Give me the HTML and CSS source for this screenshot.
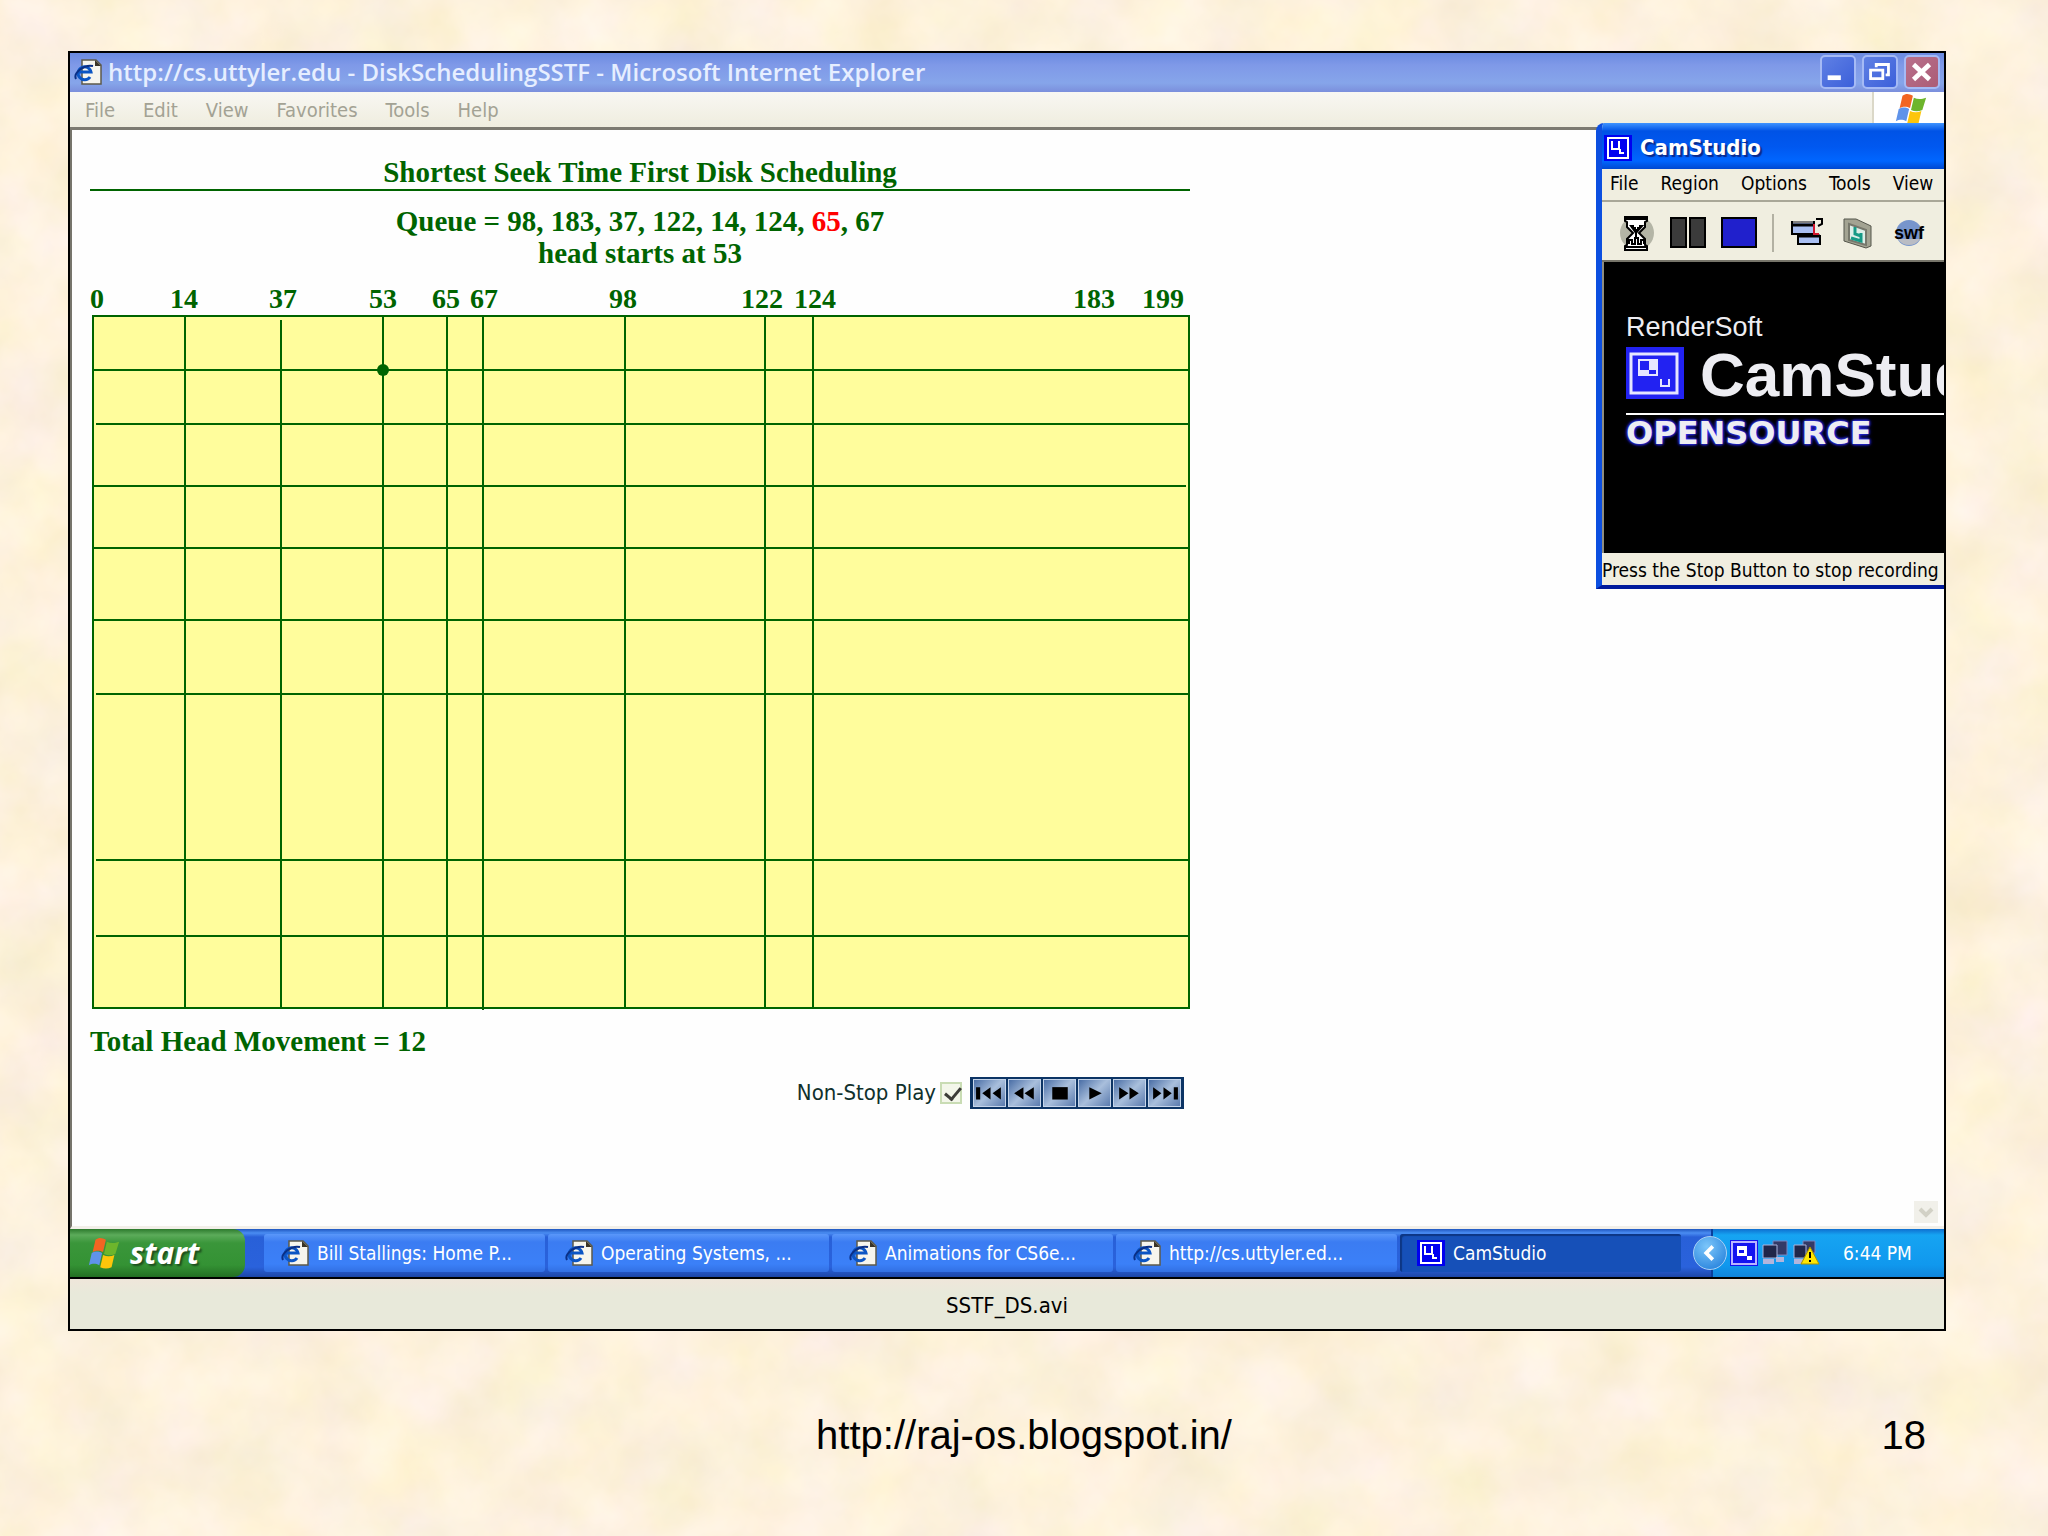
FILE: index.html
```html
<!DOCTYPE html>
<html lang="en">
<head>
    <meta charset="UTF-8">
    <title>SSTF Disk Scheduling</title>
    <link rel="stylesheet" href="styles.css">
</head>
<body>
    <svg class="paper" aria-hidden="true">
        <filter id="paperGrain" x="0" y="0" width="100%" height="100%" color-interpolation-filters="sRGB">
            <feTurbulence type="fractalNoise" baseFrequency="0.014" numOctaves="4" seed="7"/>
            <feColorMatrix type="matrix" values="0.06 0 0 0 0.962  0.06 0.03 0 0 0.9  0.08 0 0.12 0 0.762  0 0 0 0 1"/>
        </filter>
        <rect width="100%" height="100%" filter="url(#paperGrain)"/>
    </svg>

    <!-- shared icons -->
    <svg class="defs" aria-hidden="true">
        <symbol id="icon-ie" viewBox="0 0 28 26">
            <path d="M8 1h14l5 5v19H8z" fill="#f6f5ee" stroke="#5d5a4a" stroke-width="1.5"/>
            <path d="M21 1v6h6z" fill="#3a3428"/>
            <path d="M16 18a6.5 6.5 0 1 1 1-5H5" fill="none" stroke="#0b55c4" stroke-width="3"/>
            <path d="M2 20C-1 14 10 5 19 7" fill="none" stroke="#0a2f86" stroke-width="2"/>
        </symbol>
        <symbol id="icon-cam" viewBox="0 0 28 26">
            <rect width="28" height="26" fill="#0000f0"/>
            <rect x="4" y="3" width="20" height="20" fill="none" stroke="#fff" stroke-width="2"/>
            <path d="M8 6v8h7V6M16 14v4h4" fill="none" stroke="#fff" stroke-width="2"/>
        </symbol>
        <symbol id="icon-flag" viewBox="0 0 36 36">
            <path d="M9 4c4-3 7-2 11 0l-3 13c-4-2-7-2-11 0z" fill="#f26522"/>
            <path d="M21 6c4 2 8 2 13 0l-4 13c-4 2-8 2-12 0z" fill="#6db52c"/>
            <path d="M5 18c4-2 7-2 11 0l-3 13c-4-2-7-2-11 0z" fill="#5f93ea"/>
            <path d="M17 20c4 2 8 2 12 0l-3 13c-4 2-8 2-12 0z" fill="#fdc50b"/>
        </symbol>
    </svg>

    <main class="player">
        <div class="video">
            <header class="title-bar">
                <svg class="icon"><use href="#icon-ie"/></svg>
                <h1>http://cs.uttyler.edu - DiskSchedulingSSTF - Microsoft Internet Explorer</h1>
                <button class="win-btn" type="button" aria-label="Minimize">
                    <svg viewBox="0 0 34 32"><path d="M6 22h14" stroke="#fff" stroke-width="5"/></svg>
                </button>
                <button class="win-btn" type="button" aria-label="Restore">
                    <svg viewBox="0 0 34 32"><path d="M13 11V8h13v11h-3M7 14h13v9H7z" fill="none" stroke="#fff" stroke-width="3"/></svg>
                </button>
                <button class="win-btn close" type="button" aria-label="Close">
                    <svg viewBox="0 0 34 32"><path d="M8 8l17 16M25 8L8 24" stroke="#fff" stroke-width="5"/></svg>
                </button>
            </header>
            <nav class="menu-bar">
                <a href="#">File</a>
                <a href="#">Edit</a>
                <a href="#">View</a>
                <a href="#">Favorites</a>
                <a href="#">Tools</a>
                <a href="#">Help</a>
                <span class="brand"><svg><use href="#icon-flag"/></svg></span>
            </nav>

            <section class="page">
                <div class="applet">
                    <h2>Shortest Seek Time First Disk Scheduling</h2>
                    <p class="queue">Queue = 98, 183, 37, 122, 14, 124, <span class="current">65</span>, 67</p>
                    <p class="queue">head starts at 53</p>

                    <svg class="chart" viewBox="0 0 1100 734" role="img" aria-label="Head position chart">
                        <g class="ticks">
                            <text x="0" y="32">0</text>
                            <text x="80" y="32">14</text>
                            <text x="179" y="32">37</text>
                            <text x="279" y="32">53</text>
                            <text x="342" y="32">65</text>
                            <text x="380" y="32">67</text>
                            <text x="519" y="32">98</text>
                            <text x="651" y="32">122</text>
                            <text x="704" y="32">124</text>
                            <text x="983" y="32">183</text>
                            <text x="1052" y="32">199</text>
                        </g>
                        <rect class="area" x="3" y="40" width="1096" height="692"/>
                        <g class="lines">
                            <path d="M95 40v692M191 44v688M293 40v692M357 40v692M393 40v694M535 40v692M675 40v692M723 40v692"/>
                            <path d="M3 94h1096M6 148h1093M3 210h1093M3 272h1096M3 344h1096M6 418h1093M6 584h1093M6 660h1093"/>
                        </g>
                        <circle cx="293" cy="94" r="6" fill="#006400"/>
                    </svg>

                    <p class="total">Total Head Movement = 12</p>

                    <form class="controls">
                        <label for="nonStop">Non-Stop Play</label>
                        <input type="checkbox" id="nonStop" checked>
                        <div class="buttons">
                            <button type="button" aria-label="First"><svg viewBox="0 0 30 20"><path d="M2 4h4v12H2zM16 4v12l-8-6zM26 4v12l-8-6z"/></svg></button>
                            <button type="button" aria-label="Rewind"><svg viewBox="0 0 30 20"><path d="M14 4v12l-9-6zM24 4v12l-9-6z"/></svg></button>
                            <button type="button" aria-label="Stop"><svg viewBox="0 0 30 20"><path d="M8 4h15v12H8z"/></svg></button>
                            <button type="button" aria-label="Play"><svg viewBox="0 0 30 20"><path d="M10 4v12l12-6z"/></svg></button>
                            <button type="button" aria-label="Forward"><svg viewBox="0 0 30 20"><path d="M5 4v12l9-6zM15 4v12l9-6z"/></svg></button>
                            <button type="button" aria-label="Last"><svg viewBox="0 0 30 20"><path d="M4 4v12l8-6zM14 4v12l8-6zM24 4h4v12h-4z"/></svg></button>
                        </div>
                    </form>
                </div>
                <button class="scroll-down" type="button" aria-label="Scroll down">
                    <svg viewBox="0 0 24 22"><path d="M6 8l6 6 6-6" fill="none" stroke="#d2d1c6" stroke-width="4"/></svg>
                </button>
            </section>

            <aside class="cam">
                <header class="cam-title">
                    <svg class="icon"><use href="#icon-cam"/></svg>
                    <h2>CamStudio</h2>
                </header>
                <nav class="cam-menu">
                    <a href="#">File</a>
                    <a href="#">Region</a>
                    <a href="#">Options</a>
                    <a href="#">Tools</a>
                    <a href="#">View</a>
                </nav>
                <div class="cam-tools">
                    <button type="button" aria-label="Record">
                        <svg viewBox="0 0 36 36">
                            <circle cx="18" cy="18" r="17" fill="#b4b5a6"/>
                            <path d="M6 2h22v4l-2 1v5l-6 6 6 6v6l2 1v4H6v-4l2-1v-6l6-6-6-6V7L6 6z" fill="#fff" stroke="#000" stroke-width="2"/>
                            <path d="M6 4h22M6 32h22" stroke="#000" stroke-width="2"/>
                            <path d="M12 11h2v2h2v2h3v-2h2v-2h2l-6 7zM17 18v5M10 29v-4h3v4h3v-6h3v6h3v-4h3v4" fill="none" stroke="#000" stroke-width="2"/>
                        </svg>
                    </button>
                    <button type="button" aria-label="Pause">
                        <svg viewBox="0 0 36 36"><path d="M1 3h15v29H1zM20 3h15v29H20z" fill="#3b3b3b" stroke="#000" stroke-width="2"/></svg>
                    </button>
                    <button type="button" aria-label="Stop">
                        <svg viewBox="0 0 36 36"><path d="M1 3h34v29H1z" fill="#2020cc" stroke="#000" stroke-width="2"/></svg>
                    </button>
                    <span class="divider"></span>
                    <button type="button" aria-label="Options">
                        <svg viewBox="0 0 36 36">
                            <path d="M3 7h22v12H3zM9 21h22v8H9z" fill="#a9bff2" stroke="#000" stroke-width="2"/>
                            <path d="M3 10h22M9 21h22" stroke="#000" stroke-width="3"/>
                            <path d="M4 7h20" stroke="#fff" stroke-width="1"/>
                            <path d="M25 9v10h5" fill="none" stroke="#d01830" stroke-width="2"/>
                            <path d="M27 4h6v5l-4 2" fill="none" stroke="#000" stroke-width="2"/>
                        </svg>
                    </button>
                    <button type="button" aria-label="Player">
                        <svg viewBox="0 0 36 36">
                            <path d="M4 4h12l15 7v20l-5 2-22-7z" fill="#a3a392" stroke="#55564c" stroke-width="1"/>
                            <path d="M9 9l17 6v15L9 25z" fill="#dcefe8" stroke="#77786c" stroke-width="2"/>
                            <path d="M11 23l10 3v-8M15 12v7l6 2" fill="none" stroke="#159a86" stroke-width="3"/>
                        </svg>
                    </button>
                    <button type="button" aria-label="SWF Producer">
                        <svg viewBox="0 0 36 36">
                            <circle cx="18" cy="18" r="13" fill="#7795cc"/>
                            <path d="M7 24a13 13 0 0 0 22 0z" fill="#b9bcc4"/>
                            <text class="swf" x="18" y="24" text-anchor="middle">swf</text>
                        </svg>
                    </button>
                </div>
                <div class="cam-screen">
                    <p class="maker">RenderSoft</p>
                    <div class="cam-name">
                        <svg class="cam-logo" viewBox="0 0 58 52">
                            <rect width="58" height="52" fill="#2222f2"/>
                            <rect x="5" y="7" width="46" height="39" fill="none" stroke="#e6e6ff" stroke-width="3"/>
                            <path d="M12 12h20v17H12z" fill="#e6e6ff"/>
                            <path d="M14 14h9v9h-9zM23 23h7v4h-7z" fill="#2222f2"/>
                            <path d="M35 32v7h8v-7" fill="none" stroke="#e6e6ff" stroke-width="2"/>
                        </svg>
                        <strong>CamStudio</strong>
                    </div>
                    <p class="open">OPENSOURCE</p>
                </div>
                <footer class="cam-status">Press the Stop Button to stop recording</footer>
            </aside>

            <footer class="taskbar">
                <button class="start" type="button"><svg><use href="#icon-flag"/></svg>start</button>
                <button class="task" type="button"><svg class="icon"><use href="#icon-ie"/></svg>Bill Stallings: Home P...</button>
                <button class="task" type="button"><svg class="icon"><use href="#icon-ie"/></svg>Operating Systems, ...</button>
                <button class="task" type="button"><svg class="icon"><use href="#icon-ie"/></svg>Animations for CS6e...</button>
                <button class="task" type="button"><svg class="icon"><use href="#icon-ie"/></svg>http://cs.uttyler.ed...</button>
                <button class="task active" type="button"><svg class="icon"><use href="#icon-cam"/></svg>CamStudio</button>
                <div class="tray">
                    <button class="expand" type="button" aria-label="Show hidden icons">
                        <svg viewBox="0 0 34 34"><path d="M20 10l-7 7 7 7" fill="none" stroke="#fff" stroke-width="4"/></svg>
                    </button>
                    <svg class="icon" viewBox="0 0 28 26">
                        <rect width="28" height="26" fill="#1414f0"/>
                        <rect x="2" y="2" width="24" height="22" fill="none" stroke="#b9b4ff" stroke-width="2"/>
                        <path d="M7 6h10v10H7zM17 16h5v4h-5z" fill="#fff"/>
                        <path d="M9 10h5v3H9z" fill="#1414f0"/>
                    </svg>
                    <svg class="icon" viewBox="0 0 28 26">
                        <path d="M12 1h14v14H12z" fill="#343a66" stroke="#7a86c0"/>
                        <path d="M2 5h14v13H2z" fill="#20264a" stroke="#a9b2dc"/>
                        <path d="M2 19h11v5H2zM15 17h8v5h-8z" fill="#b3b5dc"/>
                    </svg>
                    <svg class="icon" viewBox="0 0 28 26">
                        <path d="M11 1h12v12H11z" fill="#343a66" stroke="#7a86c0"/>
                        <path d="M2 5h12v13H2z" fill="#20264a" stroke="#a9b2dc"/>
                        <path d="M2 19h9v5H2z" fill="#b3b5dc"/>
                        <path d="M18 7l9 17H9z" fill="#ffe600" stroke="#a89400"/>
                        <path d="M18 12v6M18 20v2" stroke="#000" stroke-width="2"/>
                    </svg>
                    <time>6:44 PM</time>
                </div>
            </footer>
        </div>
        <div class="caption">SSTF_DS.avi</div>
    </main>

    <footer class="slide-footer">
        <a href="http://raj-os.blogspot.in/">http://raj-os.blogspot.in/</a>
        <span class="number">18</span>
    </footer>
</body>
</html>
```
FILE: styles.css
```css
* {
    box-sizing: border-box;
}
body {
    margin: 0;
    padding-top: 51px;
    min-height: 100vh;
    position: relative;
    background-color: #fff2dd;
    font-family: "DejaVu Sans Condensed", "DejaVu Sans", sans-serif;
    font-size: 19px;
    color: #000;
}
h1, h2, p {
    margin: 0;
}
a {
    color: inherit;
    text-decoration: none;
}
button {
    padding: 0;
    border: none;
    background: none;
    font: inherit;
    color: inherit;
    cursor: pointer;
}
svg {
    display: block;
}
.paper {
    position: absolute;
    inset: 0;
    width: 100%;
    height: 100%;
    z-index: -1;
}
.defs {
    position: absolute;
    width: 0;
    height: 0;
}
.icon {
    width: 28px;
    height: 26px;
    flex: none;
}

/* player frame */
.player {
    margin: 0 102px 0 68px;
    border: 2px solid #000;
    background-color: #ebe9da;
}
.video {
    position: relative;
    overflow: hidden;
    border-bottom: 2px solid #000;
}
.caption {
    height: 50px;
    line-height: 54px;
    text-align: center;
    font-size: 22px;
    background: linear-gradient(#efe6da, #e8e9da 14px);
}

/* browser window */
.title-bar {
    display: flex;
    align-items: center;
    gap: 6px;
    height: 39px;
    padding: 0 4px 2px;
    background: linear-gradient(#6a8ae0, #7f99e8 12px, #86a5ea 30px, #7b8fdc);
}
.title-bar h1 {
    flex: 1;
    font-family: "Open Sans", sans-serif;
    font-size: 24px;
    font-weight: 600;
    line-height: 34px;
    color: #e6eeff;
    white-space: nowrap;
}
.win-btn {
    width: 36px;
    height: 34px;
    border: 2px solid #a5baf5;
    border-radius: 5px;
    background: linear-gradient(135deg, #5f80e4, #3c60da);
}
.win-btn.close {
    background: linear-gradient(135deg, #b8708c, #ab5c76);
}
.menu-bar {
    display: flex;
    align-items: center;
    gap: 28px;
    height: 38px;
    padding-left: 15px;
    background: linear-gradient(#f8f7f3, #efedde);
    border-bottom: 3px solid #7c7a70;
    font-size: 20px;
    color: #a3a294;
}
.brand {
    align-self: stretch;
    width: 72px;
    margin-left: auto;
    padding-left: 18px;
    background-color: #fff;
    border-left: 2px solid #dbd8c8;
}
.brand svg {
    width: 38px;
    height: 34px;
}
.page {
    display: flex;
    justify-content: space-between;
    align-items: flex-end;
    height: 1099px;
    padding: 0 6px 3px 18px;
    background-color: #fefefe;
    border-left: 2px solid #77756c;
    border-bottom: 3px solid #f2efe9;
}
.scroll-down {
    width: 24px;
    height: 22px;
    background-color: #f1f0ea;
}

/* disk scheduling applet */
.applet {
    width: 1100px;
    align-self: flex-start;
    padding-top: 26px;
    font-family: "Liberation Serif", "Times New Roman", serif;
    font-size: 29px;
    font-weight: bold;
    line-height: 32px;
    color: #006400;
}
.applet h2 {
    margin-bottom: 14px;
    font-size: 29px;
    height: 35px;
    text-align: center;
    border-bottom: 2px solid #006400;
}
.queue {
    text-align: center;
}
.current {
    color: #f00;
}
.chart {
    width: 100%;
    margin-top: 7px;
}
.ticks {
    font-size: 28px;
    fill: #006400;
}
.area {
    fill: #fffd9c;
    stroke: #006400;
    stroke-width: 2px;
}
.lines {
    fill: none;
    stroke: #006400;
    stroke-width: 2px;
}
.total {
    margin-top: 15px;
}
.controls {
    display: flex;
    justify-content: flex-end;
    align-items: center;
    margin-top: 18px;
    padding-right: 6px;
    font-family: "DejaVu Sans Condensed", "DejaVu Sans", sans-serif;
    font-size: 22px;
    font-weight: normal;
    line-height: 36px;
    color: #10302c;
}
.controls input {
    appearance: none;
    width: 22px;
    height: 22px;
    margin: 0 8px 0 4px;
    border: 2px solid #c9dcb4;
    background-color: #f3f6ea;
    position: relative;
}
.controls input:checked::after {
    content: "";
    position: absolute;
    left: 6px;
    top: 0;
    width: 7px;
    height: 13px;
    border: solid #3c3c38;
    border-width: 0 3px 3px 0;
    transform: rotate(40deg);
}
.buttons {
    display: flex;
    gap: 2px;
    padding: 2px 3px;
    background-color: #0c3465;
}
.buttons button {
    width: 33px;
    height: 28px;
    padding: 2px 0;
    border: 1px solid #c6d5ea;
    background: linear-gradient(135deg, #4a6ea6, #a9bfdc 50%, #5b7bae);
}

/* CamStudio window, runs off the right edge */
.cam {
    position: absolute;
    top: 70px;
    right: 0;
    width: 348px;
    overflow: hidden;
    white-space: nowrap;
    background-color: #f0eee0;
    border-left: 6px solid #0c4fe0;
    border-bottom: 4px solid #001a9c;
    border-top-left-radius: 8px;
}
.cam-title {
    display: flex;
    align-items: center;
    gap: 8px;
    height: 46px;
    padding: 3px 0 0 2px;
    background: linear-gradient(#3f94ff, #0053e6 8px, #0058f0 24px, #0066ff 38px, #0048d0);
}
.cam-title h2 {
    font-size: 22px;
    color: #fff;
    text-shadow: 2px 2px 1px #0a2a8c;
}
.cam-menu {
    display: flex;
    align-items: center;
    gap: 22px;
    height: 33px;
    padding: 0 0 3px 8px;
    border-bottom: 2px solid #a9a798;
}
.cam-tools {
    display: flex;
    align-items: center;
    gap: 15px;
    height: 60px;
    padding: 4px 0 0 17px;
    border-bottom: 2px solid #77756a;
}
.cam-tools svg {
    width: 36px;
    height: 36px;
}
.divider {
    width: 2px;
    height: 38px;
    background-color: #b3b1a3;
}
.swf {
    font-family: "Liberation Sans", Arial, sans-serif;
    font-size: 18px;
    font-weight: bold;
}
.cam-screen {
    height: 291px;
    padding: 47px 0 0 22px;
    background-color: #000;
    border-left: 2px solid #8f8d80;
    font-family: "Liberation Sans", Arial, sans-serif;
    color: #ededf2;
}
.maker {
    font-size: 27px;
    line-height: 36px;
}
.cam-name {
    display: flex;
    align-items: flex-start;
    gap: 16px;
    height: 70px;
    padding-top: 2px;
    border-bottom: 2px solid #fff;
}
.cam-logo {
    flex: none;
    width: 58px;
    height: 52px;
}
.cam-name strong {
    font-size: 62px;
    line-height: 56px;
}
.open {
    font-family: "DejaVu Sans", sans-serif;
    font-size: 32px;
    font-weight: bold;
    line-height: 36px;
    text-shadow: 0 0 3px #2a2af0, 0 0 3px #2a2af0, 0 0 4px #2a2af0;
}
.cam-status {
    height: 32px;
    line-height: 34px;
}

/* taskbar */
.taskbar {
    display: flex;
    align-items: center;
    gap: 3px;
    height: 48px;
    color: #fff;
    background: linear-gradient(#1f56c0, #4a8df2 4px, #2860d8 8px, #2a62dc 38px, #1c46a8);
}
.start {
    display: flex;
    align-items: center;
    gap: 8px;
    width: 175px;
    height: 100%;
    margin-right: 16px;
    padding-left: 16px;
    border-radius: 0 12px 12px 0;
    background: linear-gradient(#2d7a2d, #5cab5a 6px, #3a963a 14px, #349234 36px, #236f23);
    font-family: "Open Sans", sans-serif;
    font-size: 30px;
    font-weight: bold;
    font-style: italic;
    line-height: 40px;
    text-shadow: 2px 2px 2px #1d4d1d;
}
.start svg {
    width: 36px;
    height: 34px;
}
.task {
    display: flex;
    align-items: center;
    gap: 8px;
    flex: 0 1 281px;
    height: 38px;
    padding-left: 17px;
    white-space: nowrap;
    border-radius: 3px;
    background: linear-gradient(#5a97fa, #3b7cf2 8px, #3b80f8 30px, #3270e4);
}
.task.active {
    background: #1650b8;
    box-shadow: inset 2px 2px 1px #0d3684;
}
.tray {
    display: flex;
    align-items: center;
    gap: 3px;
    width: 233px;
    height: 100%;
    margin-left: auto;
    border-left: 2px solid #0a3f9c;
    background: linear-gradient(#0f6fd0, #16a4f2 6px, #1098ee 36px, #0f84dc);
}
.tray time {
    margin-left: 20px;
}
.expand {
    width: 34px;
    height: 34px;
    margin-left: -20px;
    border: 1px solid #a8d0f5;
    border-radius: 50%;
    background: radial-gradient(circle at 40% 30%, #7cc6fa, #1a78d8);
}

/* slide footer */
.slide-footer {
    display: grid;
    grid-template-columns: 1fr auto 1fr;
    margin-top: 80px;
    padding: 0 122px;
    font-family: "Liberation Sans", Arial, sans-serif;
    font-size: 40px;
    line-height: 48px;
}
.slide-footer a {
    grid-column: 2;
}
.number {
    text-align: right;
}
```
